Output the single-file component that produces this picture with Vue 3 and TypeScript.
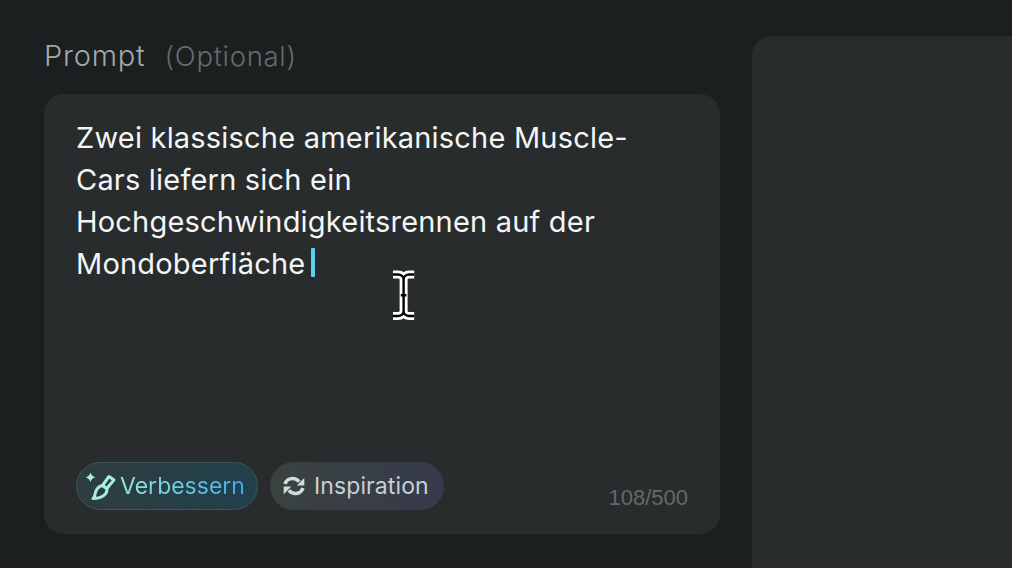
<script setup lang="ts">
const lines: string[] = [
  'Zwei klassische amerikanische Muscle-',
  'Cars liefern sich ein',
  'Hochgeschwindigkeitsrennen auf der',
]
const lastLine = 'Mondoberfläche'
const count = '108/500'
const beam =
  'M3 5.500H8C11 5.500 13.600 7.500 13.600 10.500V42C13.600 45 11 47 8 47H3M24.200 5.500H19.200C16.200 5.500 13.600 7.500 13.600 10.500M13.600 42C13.600 45 16.200 47 19.200 47H24.200M10.800 26.300H16.400'
</script>

<template>
  <div class="page">
    <section class="left">
      <div class="label">
        <span class="prompt">Prompt</span>
        <span class="optional">(Optional)</span>
      </div>
      <div class="card">
        <div class="text">
          <div v-for="l in lines" :key="l" class="line">{{ l }}</div>
          <div class="line">{{ lastLine }}<span class="caret"></span></div>
        </div>
        <div class="footer">
          <div class="buttons">
            <div class="btn improve">
              <svg class="ico" width="32" height="32" viewBox="0 0 32 32" fill="none">
                <path d="M4.500 2.500c.9 2.700 2 3.800 4.800 4.800-2.800 1-3.900 2.100-4.800 4.800-.9-2.700-2-3.800-4.800-4.800 2.800-1 3.900-2.100 4.800-4.800z" fill="#a6efe0" />
                <path d="M23 6.500l5 3.400-7.200 8.600-4.300-3z" stroke="#a6efe0" stroke-width="3" stroke-linejoin="round" />
                <path d="M16.500 15.500l4.300 3c.7 4.500-2.800 10-13.800 10 2.500-2.500 1.800-5 3-7.500 1.200-3 3.500-5 6.500-5.500z" stroke="#a6efe0" stroke-width="3" stroke-linejoin="round" />
              </svg>
              <span class="btn-text grad">Verbessern</span>
            </div>
            <div class="btn inspire">
              <svg class="ico2" width="26" height="26" viewBox="0 0 24 24" fill="none">
                <path d="M3.800 10.200C4.700 6.900 7.900 4.800 11.300 5.100c2.300.2 4.200 1.300 5.400 3" stroke="#d3dadb" stroke-width="3.400" />
                <path d="M21.500 4.500v7h-7z" fill="#d3dadb" />
                <path d="M20.200 13.800c-.9 3.300-4.100 5.400-7.500 5.100-2.300-.2-4.200-1.300-5.400-3" stroke="#d3dadb" stroke-width="3.400" />
                <path d="M2.500 19.500v-7h7z" fill="#d3dadb" />
              </svg>
              <span class="btn-text plain">Inspiration</span>
            </div>
          </div>
          <div class="count">{{ count }}</div>
        </div>
        <svg class="cursor" width="28" height="52" viewBox="0 0 28 52" fill="none">
          <path :d="beam" stroke="#fff" stroke-width="8" stroke-linejoin="round" />
          <path :d="beam" stroke="#000" stroke-width="2.400" stroke-linejoin="round" />
        </svg>
      </div>
    </section>
    <aside class="right"></aside>
  </div>
</template>

<style>
html,
body {
  margin: 0;
  background: #1b1f20;
  overflow: hidden;
}
</style>

<style scoped>
.page {
  width: 1012px;
  height: 568px;
  display: flex;
  gap: 32px;
  background: #1b1f20;
  padding-left: 44px;
  box-sizing: border-box;
  overflow: hidden;
  font-family: Inter, "Noto Sans", sans-serif;
}
.left {
  width: 676px;
  flex: none;
  padding-top: 37px;
  box-sizing: border-box;
}
.label {
  height: 57px;
  font-family: Inter, sans-serif;
  font-weight: 300;
  font-size: 27.500px;
  line-height: 38px;
  display: flex;
  gap: 19px;
}
.prompt {
  color: #a5a9aa;
  font-size: 29px;
  letter-spacing: 0.8px;
}
.optional {
  color: #666b6c;
  letter-spacing: 0.7px;
}
.card {
  position: relative;
  height: 440px;
  background: #282c2d;
  border-radius: 20px;
  box-sizing: border-box;
  padding: 23px 32px 24px;
  display: flex;
  flex-direction: column;
  justify-content: space-between;
}
.text {
  font-size: 29px;
  line-height: 42px;
  color: #f4f5f5;
  letter-spacing: 0.2px;
  font-weight: 400;
}
.line {
  white-space: nowrap;
}
.caret {
  display: inline-block;
  width: 4px;
  height: 29px;
  margin-left: 6px;
  border-radius: 1px;
  background: #5cd0f2;
  vertical-align: -3px;
}
.footer {
  display: flex;
  justify-content: space-between;
  align-items: flex-end;
}
.buttons {
  display: flex;
  gap: 12px;
}
.btn {
  height: 48px;
  border-radius: 24px;
  box-sizing: border-box;
  display: flex;
  align-items: center;
  font-size: 23px;
  white-space: nowrap;
}
.improve {
  width: 182px;
  padding-left: 8.500px;
  gap: 2.500px;
  border: 1.500px solid #3f5457;
  background: linear-gradient(90deg, #2e3d3f 0%, #21404c 100%);
}
.inspire {
  width: 174px;
  padding-left: 11px;
  gap: 7px;
  background: linear-gradient(90deg, #3a4240 0%, #363a4c 100%);
  letter-spacing: 0.1px;
}
.ico,
.ico2 {
  flex: none;
}
.btn-text {
  line-height: 30px;
}
.grad {
  background: linear-gradient(90deg, #93ead9 0%, #3fa9ea 100%);
  -webkit-background-clip: text;
  background-clip: text;
  color: transparent;
}
.plain {
  color: #c9d0d2;
}
.count {
  font-family: "Liberation Sans", sans-serif;
  font-size: 22px;
  line-height: 28px;
  color: #65696a;
  margin-bottom: -2px;
}
.cursor {
  position: absolute;
  left: 346px;
  top: 175px;
}
.right {
  flex: 1;
  margin-top: 36px;
  background: #282c2d;
  border-top-left-radius: 20px;
}
</style>
